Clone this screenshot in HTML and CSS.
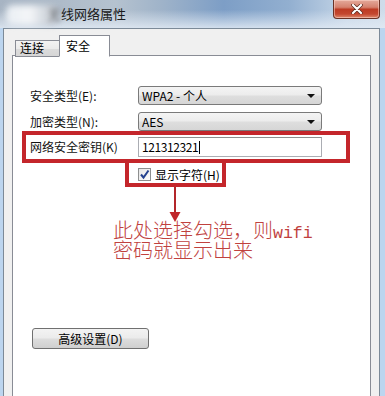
FILE: index.html
```html
<!DOCTYPE html>
<html lang="zh-CN">
<head>
<meta charset="utf-8">
<title>无线网络属性</title>
<link rel="stylesheet" href="styles.css">
</head>
<body>
<div class="window">
  <div class="titlebar">
    <span class="blur"></span>
    <span class="title"><span class="cut">无</span>线网络属性</span>
    <div class="close">
      <svg width="12" height="10" viewBox="0 0 12 10"><path d="M2 1 L10 9 M10 1 L2 9" stroke="#5a2a20" stroke-width="3.6" stroke-linecap="round"/><path d="M2 1 L10 9 M10 1 L2 9" stroke="#ffffff" stroke-width="2.2" stroke-linecap="round"/></svg>
    </div>
  </div>
  <div class="dialog">
    <div class="tabs">
      <div class="tab">连接</div>
      <div class="tab active">安全</div>
    </div>
    <div class="panel">
      <div class="form">
        <div class="row r1">
          <span class="label">安全类型(E):</span>
          <div class="combo">WPA2 - 个人<i class="arrow"></i></div>
        </div>
        <div class="row r2">
          <span class="label">加密类型(N):</span>
          <div class="combo">AES<i class="arrow"></i></div>
        </div>
        <div class="row r3">
          <span class="label">网络安全密钥(K)</span>
          <div class="input">121312321<span class="caret"></span></div>
        </div>
        <div class="check-row">
          <span class="cb"><svg width="11" height="11" viewBox="0 0 11 11"><path d="M2 5.5 L4.5 8.5 L9.5 1.5" fill="none" stroke="#23408e" stroke-width="2"/></svg></span>
          <span>显示字符(H)</span>
        </div>
      </div>
      <button class="adv">高级设置(D)</button>

      <div class="mark mark-key"></div>
      <div class="mark mark-check"></div>
      <svg class="pointer" width="14" height="36" viewBox="0 0 14 36"><path d="M7 0 V27" stroke="#b3262a" stroke-width="2"/><path d="M1.5 25 L12.5 25 L7 35 Z" fill="#c0262b"/></svg>
      <div class="note">
        <div class="note-line">此处选择勾选，则<span class="latin">wifi</span></div>
        <div class="note-line">密码就显示出来</div>
      </div>
    </div>
  </div>
</div>
</body>
</html>
```

FILE: styles.css
```css
* { box-sizing: border-box; }
html, body { margin: 0; padding: 0; }
body {
  width: 385px;
  height: 396px;
  overflow: hidden;
  background: #bcd5ef;
  font-family: "Noto Sans CJK SC", "Liberation Sans", sans-serif;
  font-size: 12px;
  color: #000;
}
.window { width: 385px; }

.titlebar {
  position: relative;
  height: 28px;
  display: flex;
  align-items: flex-start;
  background:
    linear-gradient(180deg, rgba(255,255,255,0) 35%, rgba(225,234,244,0.85) 100%),
    linear-gradient(90deg, #a7b4c3 0%, #b5c2cf 30%, #9fb3c9 42%, #7d9ec6 58%, #92afd0 75%, #c3d4e6 90%, #cfdcea 100%);
}
.blur {
  position: absolute;
  left: 6px;
  top: 5px;
  width: 52px;
  height: 20px;
  background: linear-gradient(90deg, #e9eef3 0%, #f4f6f8 45%, #d8dde3 70%, #b9bec5 100%);
  filter: blur(3px);
  border-radius: 6px;
}
.title {
  margin: 6px 0 0 48px;
  font-size: 13px;
  line-height: 16px;
  color: #1a1a1a;
  position: relative;
}
.cut { filter: blur(2px); color: #6b6f75; }
.close {
  margin-left: auto;
  margin-right: 5px;
  width: 47px;
  height: 19px;
  border: 1px solid #6a3226;
  border-top: none;
  border-radius: 0 0 4px 4px;
  background: linear-gradient(180deg, #e4a99b 0%, #d5826f 40%, #bd3b24 52%, #c4472f 78%, #de8a6f 100%);
  display: flex;
  align-items: center;
  justify-content: center;
  box-shadow: inset 0 0 0 1px rgba(255,220,210,0.5);
}

.dialog {
  margin-left: 3px;
  width: 377px;
  height: 368px;
  border: 1px solid #7c8a98;
  border-bottom: none;
  background: #f0f0f0;
  padding: 0 8px;
}
.tabs {
  height: 27px;
  display: flex;
  align-items: flex-end;
  padding-left: 3px;
  position: relative;
  z-index: 2;
}
.tab {
  width: 45px;
  height: 17px;
  border: 1px solid #898c95;
  background: linear-gradient(180deg, #f3f3f3 0%, #ebebeb 50%, #dcdcdc 51%, #d6d6d6 100%);
  padding-left: 4px;
  line-height: 14px;
  font-size: 12px;
  margin-bottom: -1px;
}
.tab.active {
  width: 51px;
  height: 22px;
  background: #fff;
  border-bottom: 1px solid #fff;
  padding-left: 6px;
  line-height: 20px;
  margin-left: -1px;
}
.panel {
  position: relative;
  margin-top: -1px;
  height: 345px;
  background: #fff;
  border: 1px solid #898c95;
  padding: 30px 0 0 17px;
  z-index: 1;
}
.form { display: flex; flex-direction: column; }
.row {
  display: grid;
  grid-template-columns: 108px 184px;
  align-items: center;
}
.r1 { height: 19px; margin-bottom: 7px; }
.r2 { height: 19px; margin-bottom: 6px; }
.r3 { height: 20px; margin-bottom: 11px; }
.label { line-height: 14px; color: #111; }
.combo {
  position: relative;
  height: 19px;
  border: 1px solid #7a7a7a;
  border-radius: 3px;
  background: linear-gradient(180deg, #f4f4f4 0%, #ececec 48%, #dedede 52%, #d6d6d6 100%);
  padding-left: 3px;
  line-height: 17px;
  font-size: 12px;
}
.arrow {
  position: absolute;
  right: 6px;
  top: 7px;
  width: 0;
  height: 0;
  border-left: 4px solid transparent;
  border-right: 4px solid transparent;
  border-top: 4px solid #111;
}
.input {
  height: 20px;
  border: 1px solid #abadb3;
  border-top-color: #8e8f8f;
  background: #fff;
  padding-left: 3px;
  line-height: 18px;
  display: flex;
  align-items: center;
  letter-spacing: -0.4px;
}
.caret {
  display: inline-block;
  width: 1px;
  height: 13px;
  background: #000;
  margin-left: 1px;
}
.check-row {
  margin-left: 108px;
  height: 13px;
  display: flex;
  align-items: center;
  gap: 4px;
  line-height: 13px;
}
.cb {
  width: 13px;
  height: 13px;
  border: 1px solid #8e8f8f;
  background: linear-gradient(135deg, #e6e6e6, #fbfbfb);
  display: flex;
  align-items: center;
  justify-content: center;
}
.adv {
  margin: 147px 0 0 2px;
  width: 117px;
  height: 21px;
  border: 1px solid #707070;
  border-radius: 3px;
  background: linear-gradient(180deg, #f3f3f3 0%, #ebebeb 48%, #dddddd 52%, #cfcfcf 100%);
  font-family: "Noto Sans CJK SC", "Liberation Sans", sans-serif;
  font-size: 12px;
  color: #000;
  padding: 0;
  line-height: 18px;
  display: block;
}

.mark {
  position: absolute;
  border: 4px solid #c4262b;
}
.mark-key { left: 9px; top: 75px; width: 328px; height: 32px; }
.mark-check { left: 112px; top: 103px; width: 101px; height: 28px; border-top: none; }
.pointer { position: absolute; left: 155px; top: 131px; }
.note {
  position: absolute;
  left: 100px;
  top: 164px;
  display: flex;
  flex-direction: column;
  font-size: 20px;
  color: #c0413e;
  white-space: nowrap;
  font-weight: 300;
}
.note-line { height: 20px; line-height: 20px; }
.latin { font-family: "Liberation Mono", monospace; font-size: 16.5px; line-height: 1; }
```
